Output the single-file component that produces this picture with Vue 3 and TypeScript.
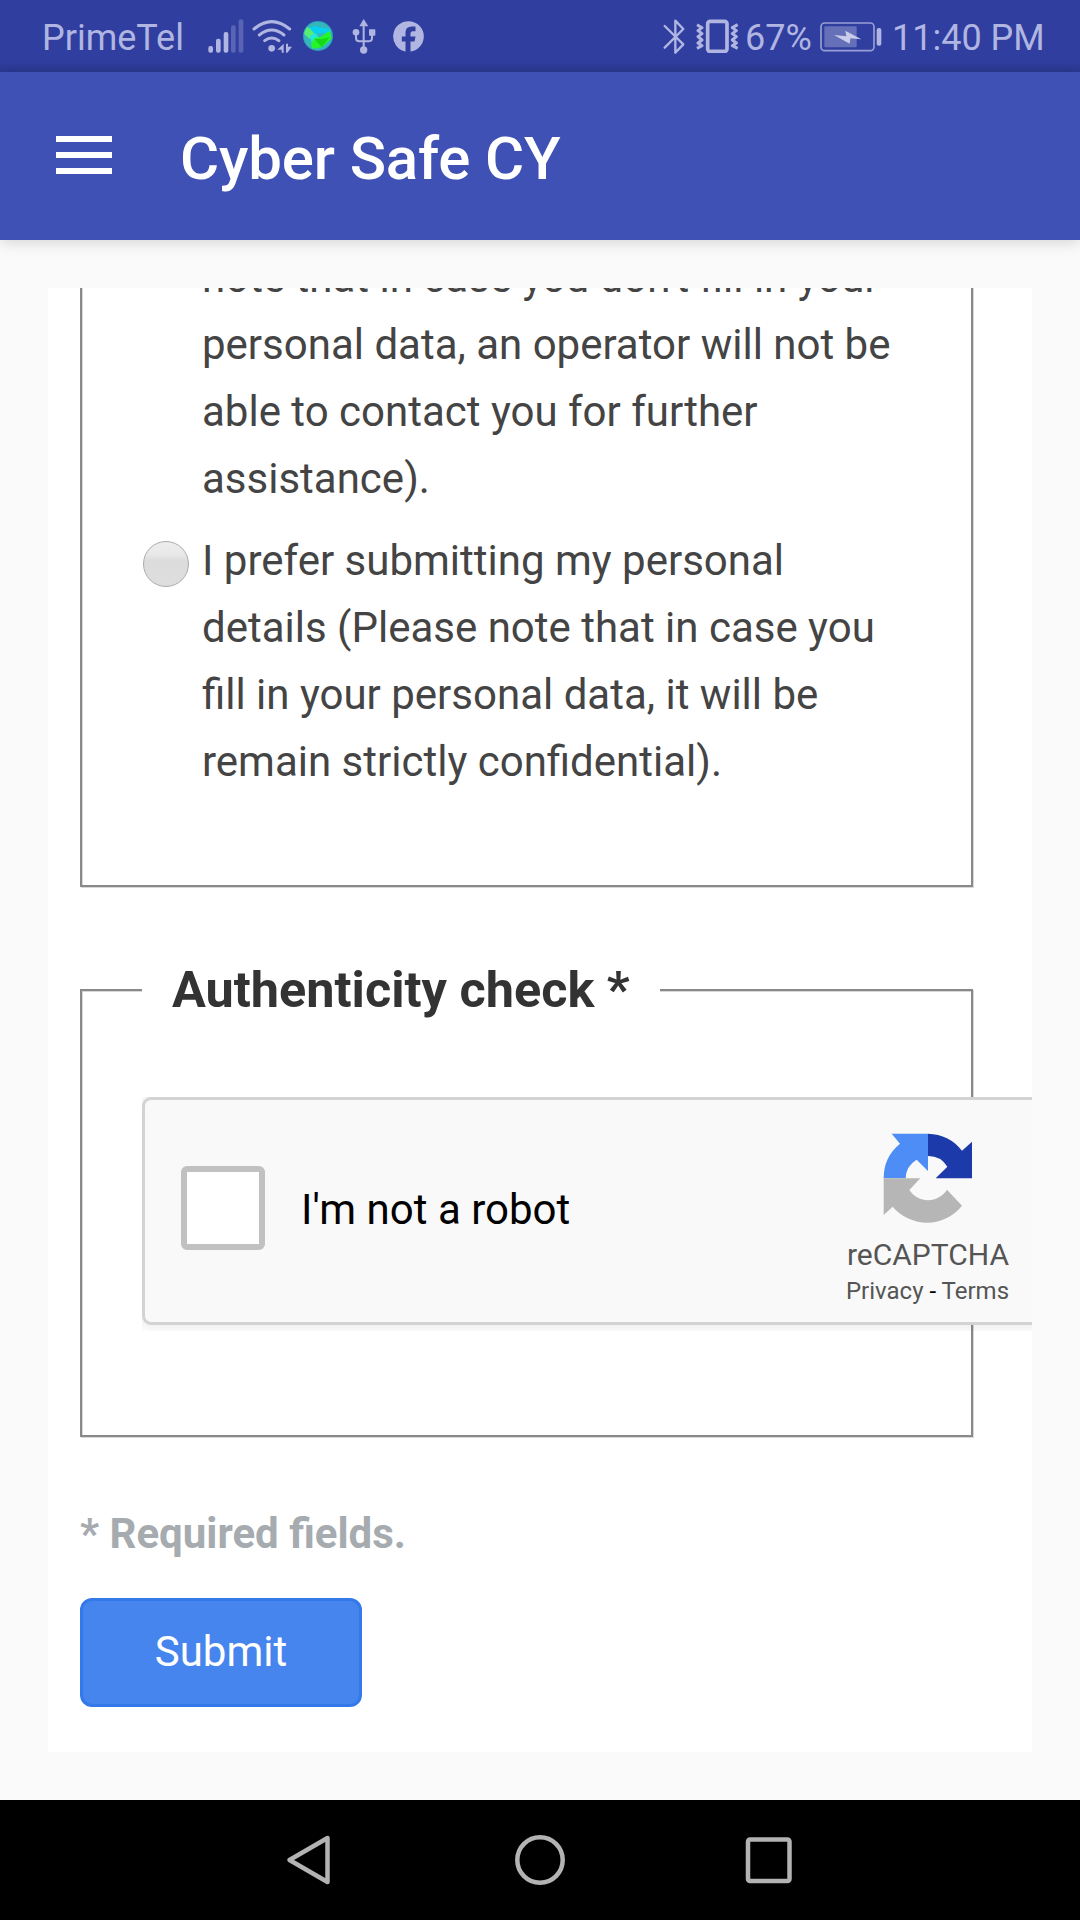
<script setup lang="ts">
const signalBars = [
  { x: 624, y: 137, on: true },
  { x: 647, y: 115, on: true },
  { x: 670, y: 95, on: true },
  { x: 692, y: 75, on: false },
  { x: 715, y: 57, on: false },
]
const anonymousLines = [
  "note that in case you don't fill in your",
  'personal data, an operator will not be',
  'able to contact you for further',
  'assistance).',
]
const personalLines = [
  'I prefer submitting my personal',
  'details (Please note that in case you',
  'fill in your personal data, it will be',
  'remain strictly confidential).',
]
</script>

<template>
  <div class="screen">
    <div class="status">
      <span class="carrier">PrimeTel</span>
      <svg class="signal" width="36" height="34" viewBox="623 56 108 102">
        <rect v-for="b in signalBars" :key="b.x" :x="b.x" :y="b.y" width="14" :height="157 - b.y" rx="6" fill="#b0b5e1" :opacity="b.on ? 1 : 0.32" />
      </svg>
      <svg class="wifi" width="40" height="34" viewBox="757 56 120 102" fill="none" stroke="#b0b5e1" stroke-width="9" stroke-linecap="round">
        <path d="M763 86Q816 42 870 86" />
        <path d="M779 104Q816 74 853 104" />
        <path d="M795 121Q816 105 838 121" />
        <circle cx="816" cy="144" r="10" fill="#b0b5e1" stroke="none" />
        <path d="M852 130V157H846V148H833ZM859 130H865V139H877L863 157H859Z" fill="#b0b5e1" stroke="none" />
      </svg>
      <svg class="globe" width="32" height="32" viewBox="907 60 96 96">
        <defs><clipPath id="globe-clip"><circle cx="955" cy="108" r="42" /></clipPath></defs>
        <circle cx="955" cy="108" r="45" fill="#2b9fc0" />
        <g clip-path="url(#globe-clip)">
          <rect x="910" y="60" width="90" height="96" fill="#35b6b9" />
          <path d="M922 84L945 78L992 88V98L950 101L934 93Z" fill="#08cfee" />
          <path d="M914 76L932 86L946 104L930 116L912 100Z" fill="#58ef70" />
          <path d="M930 108L945 98L960 114L938 134Z" fill="#22e8d8" />
          <path d="M945 114L962 112L990 92L996 116L966 142L938 146L934 132Z" fill="#26f52c" />
          <path d="M944 117L966 117L990 112L966 142Z" fill="#15d916" />
        </g>
      </svg>
      <svg class="usb" width="24" height="35" viewBox="1055 57 72 105" fill="none" stroke="#b0b5e1" stroke-width="6">
        <path d="M1090 72V152M1067 96V114Q1067 124 1077 124H1104Q1115 124 1115 114V96" />
        <path d="M1090 57L1104 79H1077Z" fill="#b0b5e1" stroke="none" />
        <circle cx="1067" cy="97" r="10" fill="#b0b5e1" stroke="none" />
        <rect x="1106" y="88" width="19" height="19" rx="2" fill="#b0b5e1" stroke="none" />
        <circle cx="1090" cy="150" r="11" fill="#b0b5e1" stroke="none" />
      </svg>
      <svg class="facebook" width="31" height="31" viewBox="1179.500 62.500 93 93">
        <path fill="#b0b5e1" d="M1272 109A46 46 0 1 0 1217 154V124H1206V109H1217V98Q1217 79 1236 79H1247V93H1239Q1232 93 1232 100V109H1247L1244 124H1232V154A46 46 0 0 0 1272 109Z" />
      </svg>

      <svg class="bluetooth" width="22" height="36" viewBox="70 56 66 108" fill="none" stroke="#b0b5e1" stroke-width="7" stroke-linejoin="round" stroke-linecap="round">
        <path d="M75 77L131 132L107 157V61L131 86L75 142" />
      </svg>
      <svg class="vibrate" width="43" height="34" viewBox="170 58 129 102" fill="none" stroke="#b0b5e1" stroke-linejoin="round">
        <rect x="205" y="65" width="58" height="90" rx="7" stroke-width="11" />
        <path d="M173 75L188 84L176 93L188 102L176 111L188 121L176 130L188 138L173 146M295 75L279 84L291 93L279 102L291 111L279 121L291 130L279 138L295 146" stroke-width="9" />
      </svg>
      <span class="percent">67%</span>
      <svg class="battery" width="62" height="30" viewBox="541 65 186 90">
        <rect x="544" y="68" width="159" height="83" rx="11" fill="none" stroke="#979ed5" stroke-width="5" />
        <rect x="554" y="78" width="97" height="63" rx="3" fill="#6670b9" />
        <rect x="711" y="83" width="14" height="53" rx="6" fill="#b0b5e1" />
        <path d="M583 104L620 108L617 91L665 117L632 114L630 130Z" fill="#c9cdeb" />
      </svg>
      <span class="clock">11:40 PM</span>
    </div>

    <header class="appbar">
      <div class="menu"><i></i><i></i><i></i></div>
      <h1>Cyber Safe CY</h1>
    </header>

    <main class="page">
      <div class="card">
        <fieldset class="group choices">
          <div class="choice">
            <span class="radio hidden"></span>
            <p><span v-for="l in anonymousLines" :key="l" class="line">{{ l }}</span></p>
          </div>
          <div class="choice">
            <span class="radio"></span>
            <p><span v-for="l in personalLines" :key="l" class="line">{{ l }}</span></p>
          </div>
        </fieldset>

        <fieldset class="group auth">
          <legend>Authenticity check *</legend>
          <div class="captcha-frame">
            <div class="captcha">
              <span class="checkbox"></span>
              <span class="captcha-label">I'm not a robot</span>
              <div class="brand">
                <svg width="90" height="92" viewBox="70 69 270 276">
                  <path fill="#4d8df5" d="M96 71H205V183L171 149A67 67 0 0 0 138 205H72A133 133 0 0 1 121 101Z" />
                  <path fill="#1c3aa9" d="M205 71A134 134 0 0 1 307 122L337 95V205H228L263 170A67 67 0 0 0 205 138Z" />
                  <path fill="#b6b6b6" d="M72 205H182L149 240A67 67 0 0 0 262 239L307 287A134 134 0 0 1 99 290L72 315Z" />
                </svg>
                <span class="brand-name">reCAPTCHA</span>
                <span class="brand-links"><a>Privacy</a> - <a>Terms</a></span>
              </div>
            </div>
          </div>
        </fieldset>

        <p class="required">* Required fields.</p>
        <button class="submit" type="button">Submit</button>
      </div>
    </main>

    <nav class="navbar">
      <svg width="50" height="54" viewBox="0 0 50 54"><path d="M44.500 5V49L6.500 27Z" /></svg>
      <svg width="54" height="54" viewBox="0 0 54 54"><circle cx="27" cy="27" r="22.700" /></svg>
      <svg width="50" height="50" viewBox="0 0 50 50"><rect x="4" y="4.500" width="41.500" height="41.500" rx="2" /></svg>
    </nav>
  </div>
</template>

<style>
body {
  margin: 0;
}
</style>

<style scoped>
* {
  box-sizing: border-box;
}
.screen {
  width: 1080px;
  height: 1920px;
  overflow: hidden;
  display: flex;
  flex-direction: column;
  background: #fafafa;
  font-family: Roboto, "Liberation Sans", sans-serif;
}
.status {
  height: 72px;
  flex: none;
  display: flex;
  align-items: flex-start;
  padding-left: 42px;
  background: linear-gradient(#303e9f 0, #303e9f 62px, #2b3991 72px);
  color: #b0b5e1;
  font-size: 36px;
  line-height: 42px;
  white-space: nowrap;
}
.status span {
  margin-top: 17px;
}
.status svg {
  flex: none;
}
.carrier {
  width: 166px;
}
.signal {
  margin-top: 19px;
}
.wifi {
  margin: 19px 0 0 8px;
}
.globe {
  margin: 20px 0 0 10px;
}
.usb {
  margin: 19px 0 0 18px;
}
.facebook {
  margin: 21px 0 0 17px;
}
.bluetooth {
  margin: 19px 0 0 239px;
}
.vibrate {
  margin: 19px 0 0 11px;
}
.percent {
  width: 80px;
  padding-left: 6px;
}
.battery {
  margin: 22px 0 0 1px;
}
.clock {
  padding-left: 10px;
}
.appbar {
  height: 168px;
  flex: none;
  display: flex;
  align-items: center;
  padding-left: 56px;
  background: #3f51b5;
  box-shadow: 0 2px 14px rgba(0, 0, 0, 0.16);
  z-index: 1;
}
.menu {
  width: 56px;
  display: flex;
  flex-direction: column;
  gap: 10px;
  margin-top: -2px;
}
.menu i {
  height: 6px;
  background: #fff;
}
h1 {
  margin: 5px 0 0 68px;
  font-size: 60px;
  font-weight: 500;
  line-height: 70px;
  letter-spacing: -0.15px;
  color: #fff;
  white-space: nowrap;
}
.page {
  height: 1560px;
  flex: none;
  padding: 48px;
}
.card {
  height: 1464px;
  overflow: hidden;
  background: #fff;
  padding: 0 0 0 32px;
}
.group {
  width: 893px;
  min-width: 0;
  margin: 0;
  padding: 0 0 0 60px;
  border: 2px solid #898989;
  box-shadow: 1px 1px 0 #d8d8d8, inset 1px 1px 0 #d8d8d8;
}
.choices {
  height: 679px;
  margin-top: -80px;
  padding-top: 34px;
}
.choice {
  display: flex;
  margin-bottom: 15px;
}
.choice p {
  margin: 0;
  font-size: 42px;
  line-height: 67px;
  color: #444;
  white-space: nowrap;
}
.line {
  display: block;
}
.radio {
  width: 46px;
  height: 46px;
  margin: 14px 13px 0 1px;
  border: 1px solid #ababab;
  border-radius: 50%;
  background: linear-gradient(#ededed 0, #e9e9e9 28%, #dcdcdc 42%, #dedede 100%);
}
.radio.hidden {
  visibility: hidden;
}
.auth {
  height: 478px;
  margin-top: 72px;
}
legend {
  padding: 0 30px;
  width: 518px;
  font-size: 50.4px;
  line-height: 62px;
  font-weight: 700;
  color: #333;
  background: #fff;
  white-space: nowrap;
}
.captcha-frame {
  width: 918px;
  height: 234px;
  margin-top: 76px;
  overflow: hidden;
  position: relative;
}
.captcha {
  width: 912px;
  height: 228px;
  display: flex;
  border: 3px solid #d3d3d3;
  border-radius: 9px;
  background: #f9f9f9;
  box-shadow: 0 0 12px 3px rgba(0, 0, 0, 0.08);
}
.checkbox {
  width: 84px;
  height: 84px;
  margin: 66px 0 0 36px;
  border: 6px solid #c1c1c1;
  border-radius: 6px;
  background: #fff;
}
.captcha-label {
  width: 544px;
  margin: 85px 0 0 36px;
  font-size: 42px;
  line-height: 50px;
  color: #000;
}
.brand {
  width: 166px;
  display: flex;
  flex-direction: column;
  align-items: center;
  color: #555;
  white-space: nowrap;
}
.brand svg {
  margin-top: 33px;
}
.brand-name {
  margin-top: 12px;
  font-size: 30px;
  line-height: 36px;
}
.brand-links {
  margin: 3px 1px 0 0;
  font-size: 24px;
  line-height: 30px;
  color: #000;
}
.brand-links a {
  color: #555;
}
.required {
  margin: 72px 0 0;
  font-size: 42px;
  line-height: 50px;
  font-weight: 700;
  color: #a5abaf;
}
.submit {
  display: block;
  width: 282px;
  height: 109px;
  margin-top: 39px;
  padding: 0 0 2px;
  border: 3px solid #3379e8;
  border-radius: 12px;
  background: #4685ee;
  color: #fff;
  font: 400 42px/50px Roboto, sans-serif;
}
.navbar {
  height: 120px;
  flex: none;
  display: flex;
  align-items: center;
  padding-left: 283px;
  background: #000;
}
.navbar svg {
  fill: none;
  stroke: #b3b3b3;
  stroke-width: 4.500;
  stroke-linejoin: round;
}
.navbar svg:nth-child(2) {
  margin-left: 180px;
}
.navbar svg:nth-child(3) {
  margin-left: 177px;
}
</style>
